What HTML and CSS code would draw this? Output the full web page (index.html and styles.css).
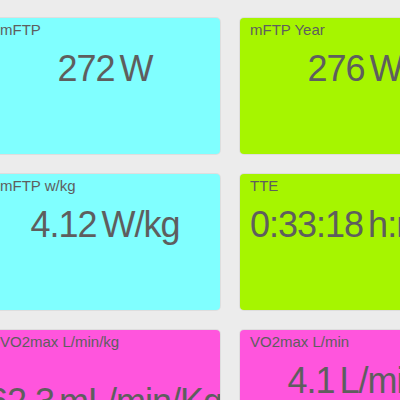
FILE: index.html
```html
<!DOCTYPE html>
<html>
<head>
<meta charset="utf-8">
<link rel="stylesheet" href="styles.css">
</head>
<body>
<div class="grid">
  <div class="card card--cyan">
    <div class="label">mFTP</div>
    <div class="value">272 W</div>
  </div>
  <div class="card card--green">
    <div class="label">mFTP Year</div>
    <div class="value">276 W</div>
  </div>
  <div class="card card--cyan">
    <div class="label">mFTP w/kg</div>
    <div class="value">4.12 W/kg</div>
  </div>
  <div class="card card--green">
    <div class="label">TTE</div>
    <div class="value">0:33:18 h:mm:ss</div>
  </div>
  <div class="card card--pink">
    <div class="label">VO2max L/min/kg</div>
    <div class="value value--wide">62.3 mL/min/Kg</div>
  </div>
  <div class="card card--pink">
    <div class="label">VO2max L/min</div>
    <div class="value">4.1 L/min</div>
  </div>
</div>
</body>
</html>
```

FILE: styles.css
```css
html, body {
  margin: 0;
  padding: 0;
  background: #ececec;
  overflow: hidden;
}

.grid {
  display: grid;
  grid-template-columns: 230px 230px;
  grid-auto-rows: 136px;
  gap: 20px;
  margin-left: -10px;
  padding-top: 18px;
  font-family: "Liberation Sans", Arial, sans-serif;
  color: #5e5e5e;
}

.card {
  border-radius: 4px;
  box-shadow: 0 0 0 1px #dedede;
  overflow: hidden;
}

.card--cyan { background: #80ffff; }
.card--green { background: #a6f500; }
.card--pink { background: #ff55dd; }

.label {
  padding: 3px 10px 0;
  font-size: 15px;
  line-height: 17px;
}

.value {
  margin-top: 10px;
  padding: 0 10px;
  font-size: 36px;
  line-height: normal;
  letter-spacing: -1px;
  word-spacing: -4px;
  text-align: center;
  white-space: nowrap;
}

.value--wide {
  margin: 31px -20px 0;
}
```
